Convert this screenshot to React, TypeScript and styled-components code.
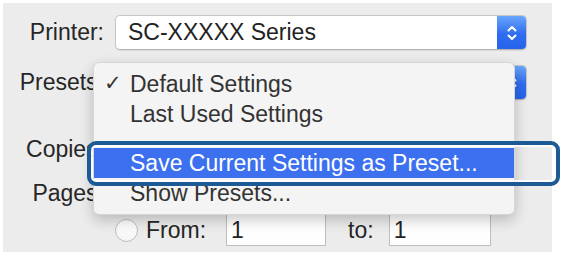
import React from "react";
import styled, { createGlobalStyle } from "styled-components";

const Global = createGlobalStyle`
  html, body { margin: 0; padding: 0; background: #ffffff; }
  body { font-family: "Liberation Sans", Arial, sans-serif; }
`;

const Stage = styled.div`
  position: relative;
  width: 562px;
  height: 256px;
  padding: 3px;
  box-sizing: border-box;
  overflow: hidden;
`;

const Panel = styled.div`
  position: relative;
  width: 549px;
  height: 249px;
  box-sizing: border-box;
  background: #ececec;
  padding: 12px 0 6px 0;
  display: flex;
  flex-direction: column;
  font-size: 23px;
  color: #262626;
`;

const Row = styled.div<{ $top: number; $h: number }>`
  display: grid;
  grid-template-columns: 101px 1fr;
  column-gap: 11px;
  align-items: center;
  margin-top: ${(p) => p.$top}px;
  height: ${(p) => p.$h}px;
`;

const Label = styled.div`
  text-align: right;
  white-space: nowrap;
`;

const Select = styled.div`
  width: 412px;
  height: 35px;
  box-sizing: border-box;
  display: flex;
  align-items: center;
  background: #ffffff;
  border: 1px solid #c6c6c6;
  border-bottom-color: #b4b4b4;
  border-radius: 5px;
  box-shadow: 0 1px 1px rgba(0, 0, 0, 0.08);
  overflow: hidden;
`;

const SelectText = styled.span`
  flex: 1;
  padding-left: 12px;
  color: #222;
  white-space: nowrap;
`;

const Stepper = styled.div`
  width: 29px;
  align-self: stretch;
  margin-left: auto;
  display: flex;
  align-items: center;
  justify-content: center;
  background: linear-gradient(#6aa6fb, #2f6cf1 55%, #2563ea);
`;

const Fields = styled.div`
  display: flex;
  align-items: center;
  height: 100%;
`;

const Radio = styled.div`
  width: 23px;
  height: 23px;
  box-sizing: border-box;
  border-radius: 50%;
  border: 1px solid #bdbdbd;
  background: linear-gradient(#ffffff, #f4f4f4);
`;

const FieldLabel = styled.span<{ $ml: number; $mr: number }>`
  margin-left: ${(p) => p.$ml}px;
  margin-right: ${(p) => p.$mr}px;
  white-space: nowrap;
`;

const TextField = styled.div<{ $w: number }>`
  width: ${(p) => p.$w}px;
  height: 32px;
  box-sizing: border-box;
  background: #ffffff;
  border: 1px solid #bfbfbf;
  border-top-color: #a9a9a9;
  padding-left: 4px;
  display: flex;
  align-items: center;
  color: #222;
`;

const Menu = styled.div`
  position: absolute;
  left: 90px;
  top: 59px;
  width: 422px;
  height: 153px;
  box-sizing: border-box;
  padding: 6px 0 5px;
  background: #f4f4f4;
  border: 1px solid rgba(0, 0, 0, 0.12);
  border-radius: 6px;
  box-shadow: 0 5px 14px rgba(0, 0, 0, 0.22);
  display: flex;
  flex-direction: column;
  font-size: 23px;
`;

const Item = styled.div<{ $active?: boolean }>`
  position: relative;
  height: 31px;
  display: flex;
  align-items: center;
  padding-left: 36px;
  white-space: nowrap;
  color: ${(p) => (p.$active ? "#ffffff" : "#333333")};
  background: ${(p) => (p.$active ? "#3c70ef" : "transparent")};
`;

const Check = styled.span`
  position: absolute;
  left: 10px;
  top: 2px;
  font-family: "DejaVu Sans", sans-serif;
  font-size: 21px;
  font-weight: bold;
  color: #333;
`;

const Separator = styled.div`
  height: 18px;
`;

const Callout = styled.div`
  position: absolute;
  left: 87px;
  top: 141px;
  width: 473px;
  height: 45px;
  box-sizing: border-box;
  border: 4px solid #1c5a95;
  border-radius: 9px;
  box-shadow: inset 0 0 0 2px rgba(255, 255, 255, 0.9);
  pointer-events: none;
`;

const Chevrons = () => (
  <svg width="12" height="20" viewBox="0 0 12 20" fill="none">
    <path d="M2.5 7.5 L6 4 L9.5 7.5" stroke="#fff" strokeWidth="2" strokeLinecap="round" strokeLinejoin="round" />
    <path d="M2.5 12.5 L6 16 L9.5 12.5" stroke="#fff" strokeWidth="2" strokeLinecap="round" strokeLinejoin="round" />
  </svg>
);

export default function App() {
  return (
    <>
      <Global />
      <Stage>
        <Panel>
          <Row $top={0} $h={35}>
            <Label>Printer:</Label>
            <Select>
              <SelectText>SC-XXXXX Series</SelectText>
              <Stepper>
                <Chevrons />
              </Stepper>
            </Select>
          </Row>
          <Row $top={15} $h={35}>
            <Label>Presets:</Label>
            <Select>
              <Stepper>
                <Chevrons />
              </Stepper>
            </Select>
          </Row>
          <Row $top={32} $h={34}>
            <Label>Copies:</Label>
            <Fields>
              <TextField $w={60} />
            </Fields>
          </Row>
          <Row $top={12} $h={30}>
            <Label>Pages:</Label>
            <Fields>
              <Radio />
            </Fields>
          </Row>
          <Row $top={6} $h={32}>
            <span />
            <Fields>
              <Radio />
              <FieldLabel $ml={8} $mr={20}>From:</FieldLabel>
              <TextField $w={100}>1</TextField>
              <FieldLabel $ml={22} $mr={15}>to:</FieldLabel>
              <TextField $w={102}>1</TextField>
            </Fields>
          </Row>
          <Menu>
            <Item>
              <Check>✓</Check>
              Default Settings
            </Item>
            <Item>Last Used Settings</Item>
            <Separator />
            <Item $active>Save Current Settings as Preset...</Item>
            <Item>Show Presets...</Item>
          </Menu>
        </Panel>
        <Callout />
      </Stage>
    </>
  );
}
